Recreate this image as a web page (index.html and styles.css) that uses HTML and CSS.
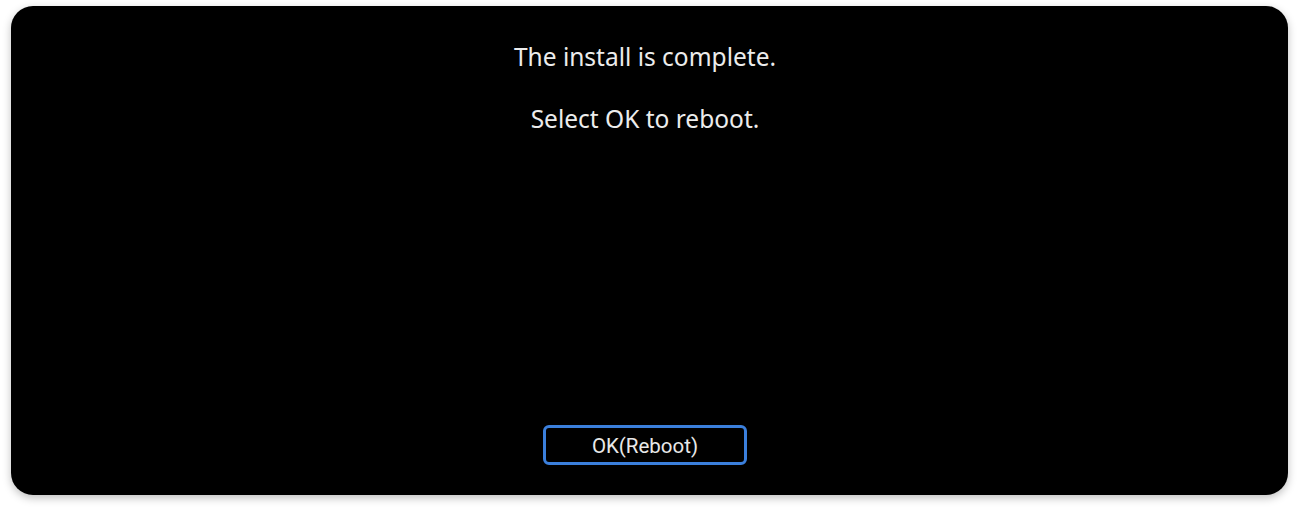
FILE: index.html
```html
<!DOCTYPE html>
<html lang="en">
<head>
<meta charset="utf-8">
<link rel="stylesheet" href="styles.css">
</head>
<body>
<div class="screen">
  <div class="messages">
    <p class="msg">The install is complete.</p>
    <p class="msg">Select OK to reboot.</p>
  </div>
  <button class="ok-btn">OK(Reboot)</button>
</div>
</body>
</html>
```
FILE: styles.css
```css
html, body {
  margin: 0;
  padding: 0;
  background: #ffffff;
}
body {
  padding: 6px 12px 21px 11px;
  height: 516px;
  box-sizing: border-box;
}
.screen {
  height: 489px;
  padding-right: 9px;
  background: #000000;
  border-radius: 22px;
  box-shadow: 0 3px 8px rgba(0, 0, 0, 0.25);
  display: flex;
  flex-direction: column;
  align-items: center;
}
.messages {
  padding-top: 36px;
  flex: 1;
  display: flex;
  flex-direction: column;
  align-items: center;
  gap: 32px;
}
.msg {
  margin: 0;
  color: #ececec;
  font-family: "Noto Sans", sans-serif;
  font-size: 24.5px;
  line-height: 30px;
}
.ok-btn {
  margin-bottom: 30px;
  width: 204px;
  height: 40px;
  border: 3px solid #3b7fdc;
  border-radius: 6px;
  background: #000000;
  color: #e8e8e8;
  font-family: "Roboto", sans-serif;
  font-size: 20.5px;
  padding: 2px 0 0 0;
}
```
